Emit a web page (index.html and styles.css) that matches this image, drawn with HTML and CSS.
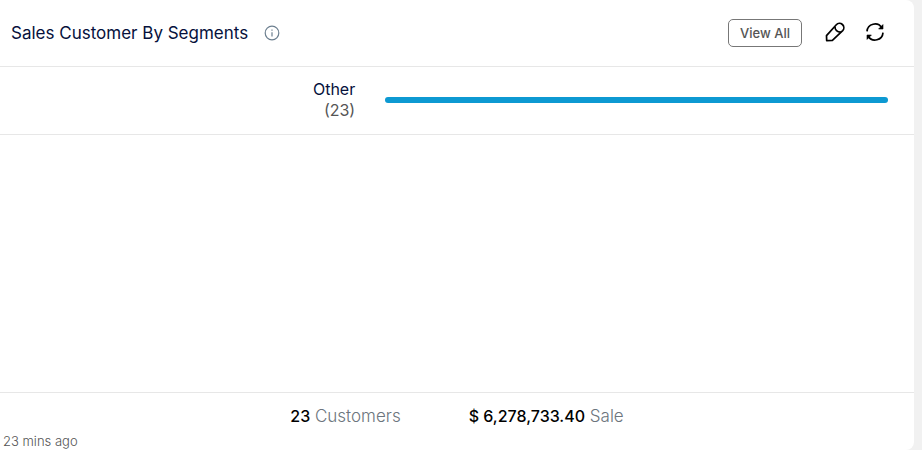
FILE: index.html
```html
<!DOCTYPE html>
<html lang="en">
<head>
  <meta charset="UTF-8">
  <meta name="viewport" content="width=device-width, initial-scale=1.0">
  <title>Sales Customer By Segments</title>
  <link rel="stylesheet" href="styles.css">
</head>
<body>
  <div class="card">
    <div class="card-header">
      <h1>Sales Customer By Segments</h1>
      <svg class="info" viewBox="0 0 16 16" width="16" height="16">
        <circle cx="8" cy="8" r="6.8"/>
        <path d="M8 7.2v4.2M8 4.6v1.2"/>
      </svg>
      <div class="actions">
        <button class="view-all">View All</button>
        <button class="icon-btn" aria-label="Edit">
          <svg viewBox="0 0 20 20" width="20" height="20">
            <path d="M1.700 18.600L1.500 13.600L11.300 2.800a4.300 4.300 0 0 1 6.400 5.800L7.400 18.300z"/>
            <path d="M10 4.600c-.2 3.200 2.200 5.800 6 5.600"/>
          </svg>
        </button>
        <button class="icon-btn" aria-label="Refresh">
          <svg viewBox="0 0 20 20" width="20" height="20">
            <path d="M2 9.400a8 8 0 0 1 14.800-3.600M18 10.600a8 8 0 0 1-14.800 3.600"/>
            <path d="M18 2.600v4.400h-4.400zM2 17.400v-4.400h4.400z" class="head"/>
          </svg>
        </button>
      </div>
    </div>
    <div class="segment">
      <div class="segment-label">
        <div class="segment-name">Other</div>
        <div class="segment-count">(23)</div>
      </div>
      <div class="track">
        <div class="bar" style="width: 100%"></div>
      </div>
    </div>
    <div class="card-footer">
      <div class="totals">
        <div><b>23</b> Customers</div>
        <div><b>$ 6,278,733.40</b> Sale</div>
      </div>
      <div class="updated">23 mins ago</div>
    </div>
  </div>
</body>
</html>
```

FILE: styles.css
```css
* {
  box-sizing: border-box;
}

body {
  margin: 0;
  padding-right: 8px;
  background-color: #f1f1f1;
  font-family: Inter, "Liberation Sans", sans-serif;
}

.card {
  display: flex;
  flex-direction: column;
  min-height: 100vh;
  background-color: #fff;
  border-radius: 0 8px 8px 0;
}

.card-header {
  display: flex;
  align-items: center;
  padding: 18px 29px 18px 11px;
  border-bottom: 1px solid #e7e7e7;
}

h1 {
  margin: 0;
  font-size: 17px;
  font-weight: 400;
  line-height: 30px;
  color: #06113c;
}

.info {
  margin-left: 16px;
  fill: none;
  stroke: #6c7f8f;
  stroke-width: 1.2;
}

.actions {
  display: flex;
  align-items: center;
  gap: 20px;
  margin-left: auto;
}

button {
  background: none;
  cursor: pointer;
  font-family: inherit;
}

.view-all {
  height: 28px;
  margin-right: 3px;
  padding: 0 11px;
  border: 1px solid #777;
  border-radius: 5px;
  font-size: 13px;
  font-weight: 500;
  color: #555;
}

.icon-btn {
  display: flex;
  padding: 0 0 3px;
  border: none;
}

.icon-btn svg {
  fill: none;
  stroke: #000;
  stroke-width: 1.7;
  stroke-linejoin: round;
}

.icon-btn .head {
  fill: #000;
  stroke-width: 0.6;
}

.segment {
  display: flex;
  align-items: center;
  gap: 30px;
  padding: 12px 26px 13px 0;
  border-bottom: 1px solid #e7e7e7;
}

.segment-label {
  width: 40%;
  font-size: 16px;
  line-height: 21px;
  text-align: right;
}

.segment-name {
  color: #06113c;
}

.segment-count {
  color: #555;
}

.track {
  flex: 1;
}

.bar {
  height: 6px;
  border-radius: 3px;
  background-color: #0d99d2;
}

.card-footer {
  margin-top: auto;
  border-top: 1px solid #e7e7e7;
}

.totals {
  display: flex;
  justify-content: center;
  gap: 68px;
  padding: 12px 0 6px;
  font-size: 17px;
  font-weight: 300;
  line-height: 22px;
  color: #6c757d;
}

.totals b {
  font-size: 16px;
  font-weight: 500;
  color: #000;
}

.updated {
  padding-left: 3px;
  font-size: 13px;
  font-weight: 300;
  line-height: 17px;
  color: #555;
}
```
